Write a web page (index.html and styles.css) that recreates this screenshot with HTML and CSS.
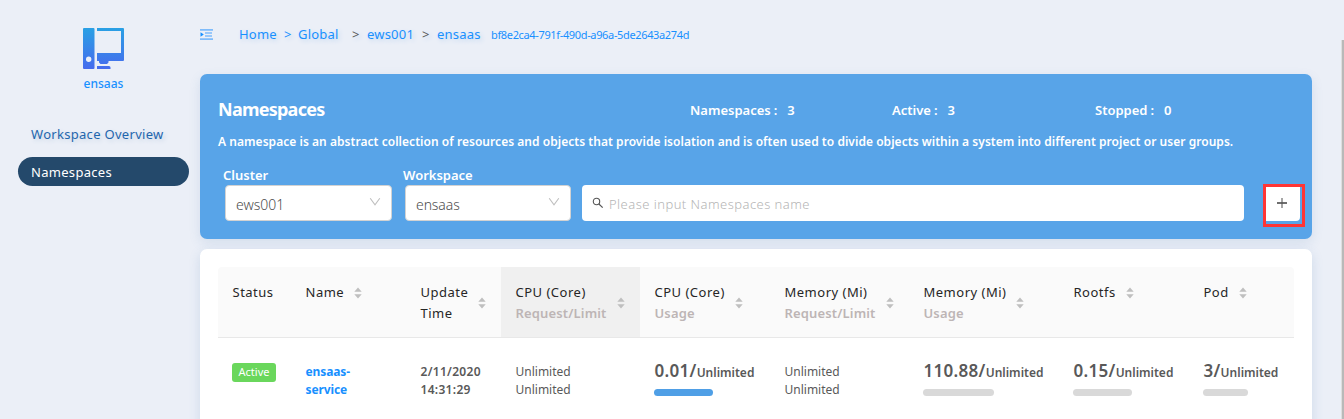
FILE: index.html
```html
<!DOCTYPE html>
<html lang="en">
<head>
<meta charset="utf-8">
<title>Namespaces</title>
<link rel="stylesheet" href="styles.css">
</head>
<body>
<svg class="defs" width="0" height="0">
  <symbol id="sort" viewBox="0 0 8 12"><path d="M4 .6 7.700 4.800H.3zM4 11.400.3 7.200h7.400z" fill="#bfbfbf"/></symbol>
  <symbol id="chevron" viewBox="0 0 12 10"><path d="M1.2 1.2 6 7.8l4.800-6.600" fill="none" stroke="#bfbfbf" stroke-width="1.100"/></symbol>
</svg>
<div class="app">
  <aside class="sidebar">
    <div class="brand">
      <svg width="42" height="42" viewBox="0 0 42 42">
        <defs><linearGradient id="g" gradientUnits="userSpaceOnUse" x1="0" y1="0" x2="0" y2="42"><stop offset="0" stop-color="#29a0e4"/><stop offset="1" stop-color="#476aee"/></linearGradient></defs>
        <path fill="url(#g)" fill-rule="evenodd" d="M1 0h9.500a1 1 0 0 1 1 1v39a1 1 0 0 1-1 1H1a1 1 0 0 1-1-1V1a1 1 0 0 1 1-1zm4.700 28.500a2.700 2.700 0 1 0 0 5.400 2.700 2.700 0 0 0 0-5.400zM14 0h26a1 1 0 0 1 1 1v31a1 1 0 0 1-1 1H25.500v1.500L24 36h-6.500L16 34.500V33h-2v-8h24V3H14zM14 38h12a1.500 1.500 0 0 1 1.500 1.500V41H14z"/>
      </svg>
      <div class="brand-name">ensaas</div>
    </div>
    <nav class="nav">
      <a class="nav-item">Workspace Overview</a>
      <a class="nav-item active">Namespaces</a>
    </nav>
  </aside>
  <main class="main">
    <header class="crumbs">
      <svg class="fold" width="13" height="12" viewBox="0 0 13 12"><path d="M0 0h13v1.800H0zM5 3.200h7v1.600H5zM5 6.200h7v1.600H5zM0 9.200h13V11H0z" fill="#7fbcfb"/><path d="M.5 3.200 3.800 5.500.5 7.800z" fill="#1890ff"/></svg>
      <span class="crumb c-home">Home</span><span class="crumb c-sep1">&gt;</span><span class="crumb c-global">Global</span><span class="crumb c-sep2">&gt;</span><span class="crumb c-ews">ews001</span><span class="crumb c-sep3">&gt;</span><span class="crumb c-ens">ensaas</span><span class="crumb-id">bf8e2ca4-791f-490d-a96a-5de2643a274d</span>
    </header>
    <section class="banner">
      <div class="banner-top">
        <h1>Namespaces</h1>
        <div class="stat">Namespaces<i>:</i>3</div>
        <div class="stat">Active<i>:</i>3</div>
        <div class="stat">Stopped<i>:</i>0</div>
      </div>
      <p class="desc">A namespace is an abstract collection of resources and objects that provide isolation and is often used to divide objects within a system into different project or user groups.</p>
      <div class="filters">
        <div class="field"><label>Cluster</label><div class="select">ews001<svg width="12" height="10"><use href="#chevron"/></svg></div></div>
        <div class="field"><label>Workspace</label><div class="select narrow">ensaas<svg width="12" height="10"><use href="#chevron"/></svg></div></div>
        <div class="search"><svg width="12" height="12" viewBox="0 0 12 12"><circle cx="4.500" cy="4.500" r="3.200" fill="none" stroke="#555" stroke-width="1.100"/><path d="m6.900 7 3.800 3.600" stroke="#555" stroke-width="1.200"/></svg><span>Please input Namespaces name</span></div>
        <div class="add-frame"><button class="add" aria-label="Add"><svg width="10" height="10" viewBox="0 0 10 10"><path d="M5 0v10" stroke="#888" stroke-width="1.500"/><path d="M0 5h10" stroke="#555" stroke-width="1.700"/></svg></button></div>
      </div>
    </section>
    <section class="card">
      <div class="row head">
        <div class="cell"><span>Status</span></div>
        <div class="cell"><span>Name</span><svg class="sort"><use href="#sort"/></svg></div>
        <div class="cell"><span>Update<br>Time</span><svg class="sort"><use href="#sort"/></svg></div>
        <div class="cell sorted"><span>CPU (Core)<br><b>Request/Limit</b></span><svg class="sort"><use href="#sort"/></svg></div>
        <div class="cell"><span>CPU (Core)<br><b>Usage</b></span><svg class="sort"><use href="#sort"/></svg></div>
        <div class="cell"><span>Memory (Mi)<br><b>Request/Limit</b></span><svg class="sort"><use href="#sort"/></svg></div>
        <div class="cell"><span>Memory (Mi)<br><b>Usage</b></span><svg class="sort"><use href="#sort"/></svg></div>
        <div class="cell"><span>Rootfs</span><svg class="sort"><use href="#sort"/></svg></div>
        <div class="cell"><span>Pod</span><svg class="sort"><use href="#sort"/></svg></div>
      </div>
      <div class="row body">
        <div class="cell"><span class="tag">Active</span></div>
        <div class="cell name">ensaas-<br>service</div>
        <div class="cell time">2/11/2020<br>14:31:29</div>
        <div class="cell">Unlimited<br>Unlimited</div>
        <div class="cell usage"><div><strong>0.01/</strong>Unlimited</div><div class="bar used" style="width:59px"></div></div>
        <div class="cell">Unlimited<br>Unlimited</div>
        <div class="cell usage"><div><strong>110.88/</strong>Unlimited</div><div class="bar" style="width:71px"></div></div>
        <div class="cell usage"><div><strong>0.15/</strong>Unlimited</div><div class="bar" style="width:59px"></div></div>
        <div class="cell usage"><div><strong>3/</strong>Unlimited</div><div class="bar" style="width:45px"></div></div>
      </div>
    </section>
  </main>
  <div class="scroll"></div>
</div>
</body>
</html>
```
FILE: styles.css
```css
* { box-sizing: border-box; }
body { margin: 0; background: #ebeff7; font-family: "Noto Sans", "Open Sans", sans-serif; font-size: 13px; color: #595959; overflow: hidden; }
.defs { display: block; height: 0; }
.app { display: flex; height: 419px; white-space: nowrap; }
.sidebar { width: 200px; flex: none; padding-top: 28px; }
.brand { display: flex; flex-direction: column; align-items: center; padding-left: 7px; height: 90px; }
.brand svg { display: block; }
.brand-name { font-size: 12px; line-height: 16px; margin-top: 6px; font-weight: 500; color: #1890ff; }
.nav { padding: 1px 11px 0 18px; }
.nav-item { display: flex; align-items: center; height: 29px; border-radius: 15px; padding: 0 13px; margin-bottom: 9px; color: #1f66ad; font-size: 13px; letter-spacing: .3px; text-shadow: 2px 2px 4px #c6d4e5; }
.nav-item.active { background: #24496b; color: #fff; text-shadow: none; }
.main { width: 1112px; flex: none; }
.crumbs { height: 74px; display: flex; align-items: flex-start; padding-top: 24px; line-height: 20px; color: #1890ff; }
.fold { margin-top: 5px; width: 13px; }
.crumb { font-size: 13px; letter-spacing: .2px; text-shadow: 2px 2px 4px #bed5ef; }
.c-home { margin-left: 26px; width: 45px; }
.c-sep1 { width: 14px; }
.c-global { width: 54px; }
.c-sep2 { width: 15px; color: #595959; }
.c-ews { width: 55px; }
.c-sep3 { width: 15px; color: #595959; }
.c-ens { width: 54px; }
.crumb-id { font-size: 11px; letter-spacing: -.35px; line-height: 21px; }
.banner { height: 165px; border-radius: 7px; background: #58a4e8; color: #fff; padding: 24px 7px 0 18px; box-shadow: 0 4px 12px rgba(70,120,180,.14); }
.banner-top { display: grid; grid-template-columns: 472px 202px 203px 1fr; height: 24px; align-items: center; }
h1 { font-size: 18px; font-weight: 700; line-height: 24px; letter-spacing: -.75px; margin: -2px 0 0; }
.stat { font-size: 13px; font-weight: 600; }
.stat i { font-style: normal; margin: 0 10px 0 3px; }
.desc { font-size: 12px; font-weight: 600; line-height: 18px; letter-spacing: .04px; margin: 11px 0 0; }
.filters { display: flex; height: 70px; margin-top: 15px; align-items: flex-end; padding-bottom: 15px; }
.field { width: 180px; display: flex; flex-direction: column; align-items: flex-start; padding-left: 5px; }
.field label { font-size: 13px; font-weight: 600; line-height: 18px; margin-bottom: 1px; }
.select { width: 167px; height: 36px; margin-left: 2px; background: #fff; border: 1px solid #d2d2d2; border-radius: 4px; display: flex; align-items: center; justify-content: space-between; padding: 2px 10px 0; color: #4d4d4d; font-size: 14px; font-weight: 300; }
.narrow { width: 166px; letter-spacing: -.1px; }
.select svg { margin-top: -4px; }
.search { width: 662px; height: 36px; margin-left: 4px; border-radius: 4px; background: #fff; color: #b5b5b5; display: flex; align-items: center; padding-left: 10px; }
.search span { margin: 2px 0 0 5px; font-weight: 300; letter-spacing: .46px; }
.add-frame { width: 42px; height: 43px; margin: 0 0 -6px 19px; border: 3px solid #ff3535; }
.add { display: flex; align-items: center; justify-content: center; width: 34px; height: 34px; padding: 0 2px 2px 0; border: 0; border-radius: 0 0 4px 0; background: #fff; }
.card { margin-top: 10px; height: 190px; padding: 18px 18px 0; border-radius: 7px; background: #fff; box-shadow: 0 4px 12px rgba(70,120,180,.18); }
.row { display: grid; grid-template-columns: 73px 115px 95px 139px 130px 139px 150px 130px 105px; }
.head { height: 71px; background: #fafafa; border-bottom: 1px solid #e8e8e8; border-radius: 4px 4px 0 0; color: #262626; }
.head .cell { display: flex; align-items: center; align-self: start; height: 70px; line-height: 21px; padding: 2px 0 0 14.5px; font-size: 13px; letter-spacing: .5px; }
.head .cell:nth-child(1), .head .cell:nth-child(2), .head .cell:nth-child(n+8) { height: 49px; }
.head b { font-weight: 600; color: #bdb5b5; letter-spacing: .15px; }
.head .sorted { background: #f0f0f0; }
.sort { width: 8px; height: 12px; margin-left: 10px; }
.body { padding-top: 25px; }
.body .cell { padding-left: 14.5px; font-size: 12px; line-height: 18px; }
.tag { display: block; width: 44px; height: 19px; margin-left: -.5px; border-radius: 3px; background: #6ad75c; color: #fff; font-size: 11px; line-height: 18px; text-align: center; }
.body .name { color: #1890ff; font-weight: 700; letter-spacing: -.1px; }
.body .time { font-weight: 600; letter-spacing: .3px; }
.body .usage { font-weight: 600; }
.usage div { height: 18px; margin-top: -1px; }
.usage strong { font-size: 17px; font-weight: 600; letter-spacing: .3px; }
.usage .bar { height: 7px; border-radius: 4px; background: #d9d9d9; margin: 9px 0 0 -.5px; }
.usage .used { background: #4f9fe6; }
.scroll { width: 3px; margin: 40px 0 0 auto; background: #b9b9b9; border-left: 1px solid #dedede; }
```
